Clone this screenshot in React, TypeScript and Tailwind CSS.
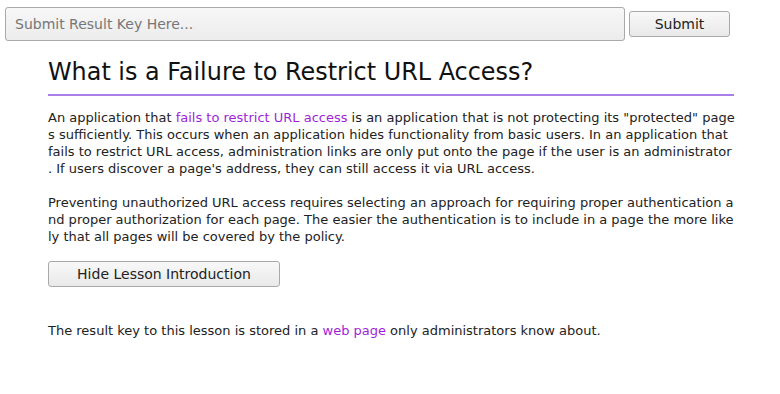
import React from 'react';

const font = { fontFamily: '"DejaVu Sans", sans-serif' };

const App = () => {
  return (
    <div className="min-h-[394px] bg-white text-[#222]" style={font}>
      {/* result key bar */}
      <div className="flex items-center pl-[5px] pt-[7px]">
        <input
          type="text"
          placeholder="Submit Result Key Here..."
          className="h-[34px] w-[620px] rounded-[3px] border border-[#a9a9a9] bg-gradient-to-b from-[#f7f7f7] to-[#ececec] px-[9px] text-[14px] text-[#444] placeholder:text-[#767676] outline-none"
        />
        <button className="ml-[4px] h-[26px] w-[101px] rounded-[3px] border border-[#a9a9a9] bg-gradient-to-b from-[#f8f8f8] to-[#e9e9e9] text-[14px] text-[#222]">
          Submit
        </button>
      </div>

      <div className="ml-[48px] w-[686px]">
        <h1 className="mt-[15px] border-b-2 border-[#a97ee9] pb-[6px] text-[23.9px] leading-[32px] text-[#111]">
          What is a Failure to Restrict URL Access?
        </h1>

        {/* lines broken where the original page breaks them */}
        <p className="mt-[13px] whitespace-nowrap text-[13px] leading-[17px]">
          An application that <a className="text-[#a11fd8]">fails to restrict URL access</a> is an application that is not protecting its "protected" page
          <br />
          s sufficiently. This occurs when an application hides functionality from basic users. In an application that
          <br />
          fails to restrict URL access, administration links are only put onto the page if the user is an administrator
          <br />
          . If users discover a page's address, they can still access it via URL access.
        </p>

        <p className="mt-[17px] text-[13px] leading-[17px] break-all">
          Preventing unauthorized URL access requires selecting an approach for requiring proper authentication and proper authorization for each page. The easier the authentication is to include in a page the more likely that all pages will be covered by the policy.
        </p>

        <button className="mt-[16px] h-[26px] w-[232px] rounded-[3px] border border-[#a9a9a9] bg-gradient-to-b from-[#f8f8f8] to-[#e9e9e9] text-[14px] text-[#222]">
          Hide Lesson Introduction
        </button>

        <p className="mt-[35px] text-[13px] leading-[17px]">
          The result key to this lesson is stored in a <a className="text-[#a11fd8]">web page</a> only administrators know about.
        </p>
      </div>
    </div>
  );
};

export default App;
